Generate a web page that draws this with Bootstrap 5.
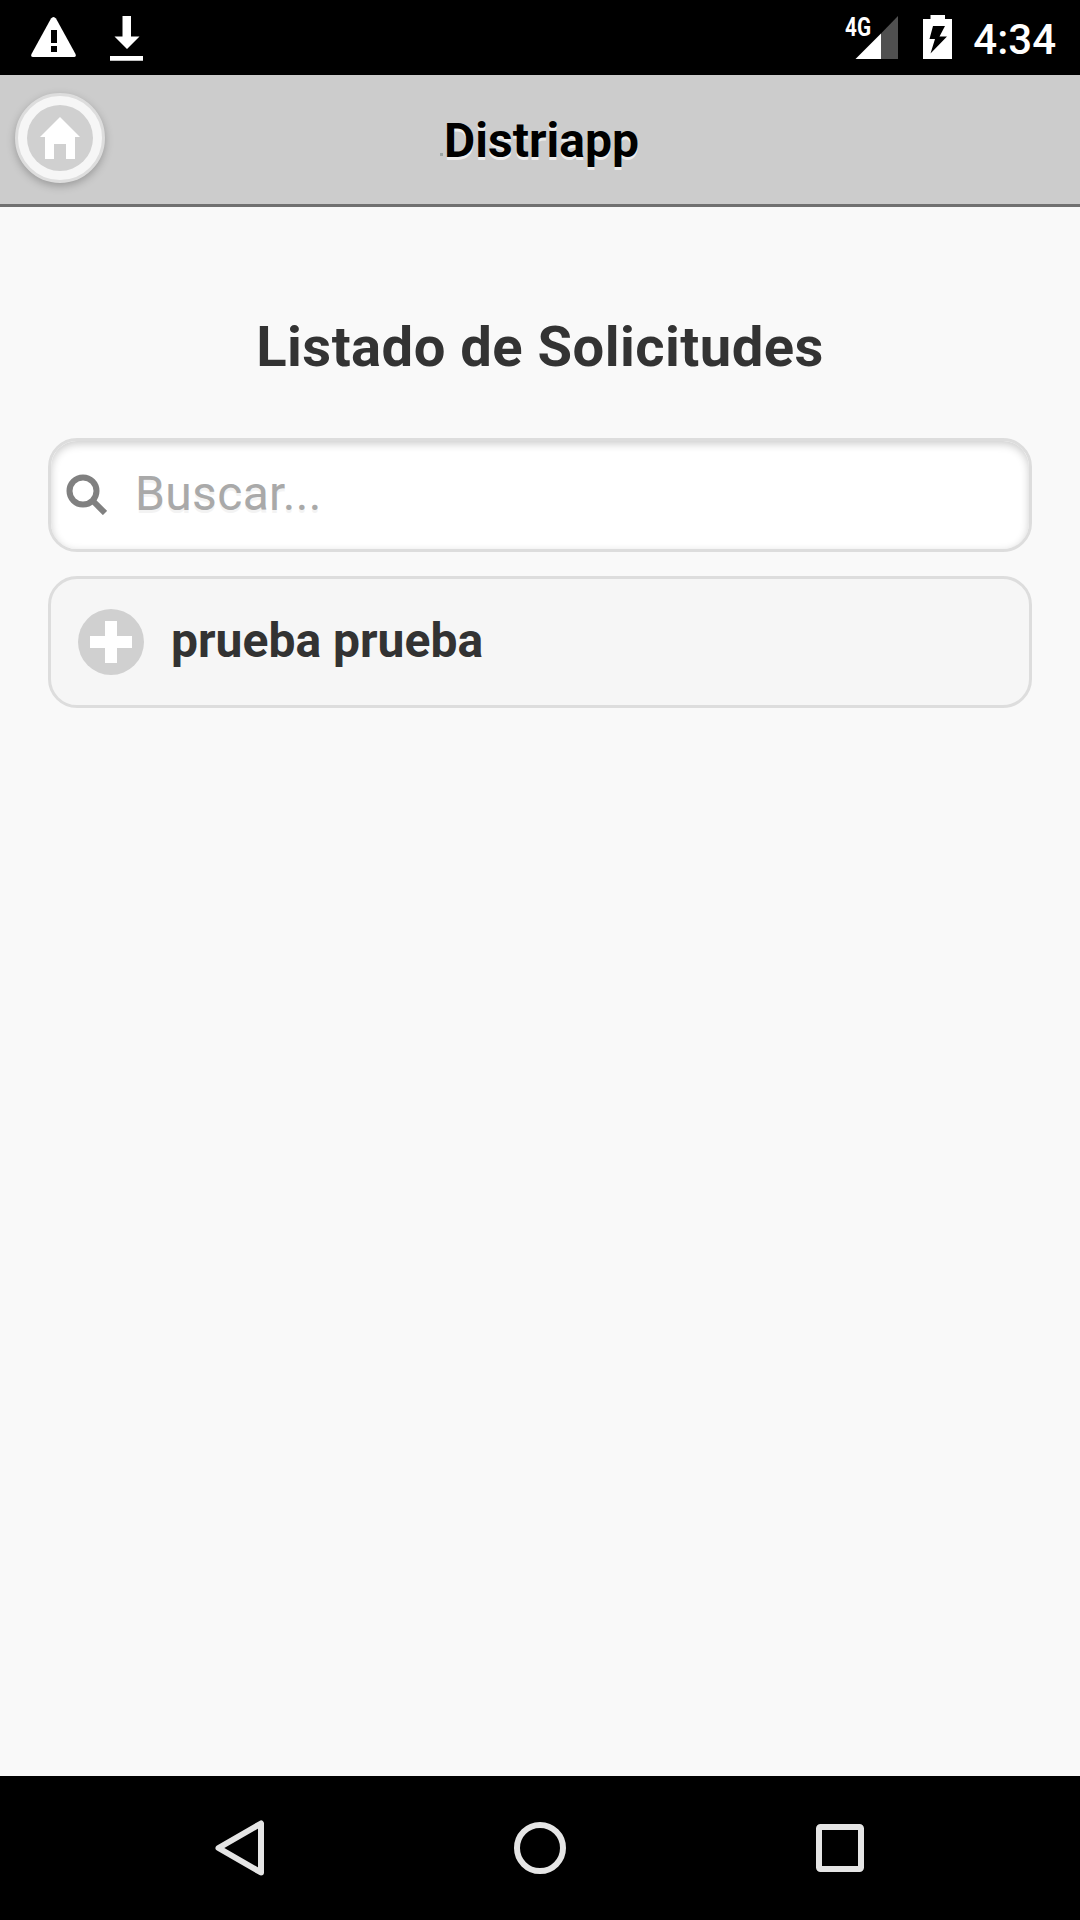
<!DOCTYPE html>
<html lang="es">
<head>
<meta charset="utf-8">
<meta name="viewport" content="width=device-width, initial-scale=1">
<title>Distriapp</title>
<link href="https://cdn.jsdelivr.net/npm/bootstrap@5.3.0/dist/css/bootstrap.min.css" rel="stylesheet">
<style>
body{font-family:Roboto,"Noto Sans",sans-serif;font-size:48px;line-height:1.3;color:#333;background:#f9f9f9}
svg{display:block;flex:none}
.status-bar{height:75px;background:#000;color:#fff;padding:0 24px 0 31px}
.clock{font-size:42px;font-weight:500;line-height:1;margin-left:20px;padding-top:5px}
.app-bar{height:132px;background:#ccc;border-bottom:3px solid #707070;padding-left:15px}
.home-btn,.home-btn:hover{width:90px;height:90px;padding:0;border:3px solid #ddd;background:#f6f6f6;box-shadow:0 3px 9px rgba(0,0,0,.25);margin-top:-3px}
.app-title{font-size:48px;font-weight:700;color:#000;line-height:62px;text-shadow:0 3px 0 #eee;margin:2px 106px 0 0}
.speck{width:3px;height:3px;background:#9aa4a4;margin:30px 1px 0 0}
.page-title{font-size:56.16px;font-weight:700;letter-spacing:.45px;line-height:73px;margin:104px 0 54px;text-align:center}
.search-box{height:114px;border:3px solid #ddd;border-radius:29px;background:#fff;box-shadow:inset 0 3px 9px rgba(0,0,0,.2);padding-left:14px}
.search-box svg{margin-top:-2px}
.search-box .form-control,.search-box .form-control:focus{font-size:48px;letter-spacing:.35px;line-height:62px;padding:0;margin-left:28px;border:0;background:none;box-shadow:none;border-radius:0;margin-top:-3px}
.search-box .form-control::placeholder{color:#a9a9a9;opacity:1;text-shadow:0 3px 0 #f3f3f3}
.request,.request:hover{height:132px;margin-top:24px;border:3px solid #ddd;border-radius:29px;background:#f6f6f6;padding:0 0 0 27px;font-size:48px;font-weight:700;line-height:62px;color:#333;text-shadow:0 3px 0 #f9f9f9}
.request-name{margin:-2px 0 0 27px}
.nav-keys{height:144px;background:#000}
.nav-keys svg{margin:0 114px}
</style>
<script src="https://cdn.jsdelivr.net/npm/bootstrap@5.3.0/dist/js/bootstrap.bundle.min.js"></script>
</head>
<body>
<div class="d-flex flex-column vh-100">
  <div class="status-bar d-flex align-items-center">
    <svg width="45" height="75" viewBox="31 0 45 75"><path fill="#fff" d="M51 18.500Q53.500 15.500 56 18.500L75.500 54Q76.500 57 74 57H33Q30.500 57 31.500 54Z"/><path d="M51 30h6v13h-6zM51 46h6v6h-6z"/></svg>
    <svg class="me-auto" width="68" height="75" viewBox="76 0 68 75"><path fill="#fff" d="M122.500 16h8.500v20.500h8.500L127 49 114.500 36.500h8zM110 56h33v4.800h-33z"/></svg>
    <svg width="54" height="75" viewBox="845 0 54 75"><text x="845" y="35.500" textLength="26" lengthAdjust="spacingAndGlyphs" font-family="Roboto" font-weight="700" font-size="25" fill="#fff">4G</text><path fill="#505050" d="M881 33.500 898 16v43h-17z"/><path fill="#fff" d="M855.500 59 881 33.500V59z"/></svg>
    <svg class="ms-4" width="30" height="75" viewBox="923 0 30 75"><path fill="#fff" d="M930.500 15h14.500v4h7v40h-29V19h7.500z"/><path d="M933 26h12l-5.500 10.500h7.500L930.500 53.500l4.500-14.500h-5.500z"/></svg>
    <span class="clock">4:34</span>
  </div>
  <header class="app-bar d-flex align-items-center">
    <a href="#" class="home-btn btn rounded-circle" aria-label="Inicio"><svg width="84" height="84" viewBox="18 96 84 84"><circle cx="60" cy="138" r="33" fill="#d0d0d0"/><path fill="#fff" d="M60 117 80 137h-5v22h-9v-15H54v15h-9v-22h-5z"/></svg></a>
    <div class="flex-fill d-flex justify-content-center align-items-center"><i class="speck"></i><h1 class="app-title">Distriapp</h1></div>
  </header>
  <main class="flex-fill px-5">
    <h3 class="page-title">Listado de Solicitudes</h3>
    <div class="search-box d-flex align-items-center">
      <svg width="42" height="42" viewBox="65 473 42 42" fill="none" stroke="#808080"><circle cx="83" cy="491" r="13.500" stroke-width="6"/><path stroke-width="6" d="m92.500 500.500 12.500 12.500"/></svg>
      <input class="form-control" type="text" placeholder="Buscar...">
    </div>
    <a href="#" class="request d-flex align-items-center text-decoration-none">
      <svg width="66" height="66" viewBox="0 0 66 66"><circle cx="33" cy="33" r="33" fill="#d0d0d0"/><path fill="#fff" d="M27 12h12v15h15v12H39v15H27V39H12V27h15z"/></svg>
      <span class="request-name">prueba prueba</span>
    </a>
  </main>
  <nav class="nav-keys d-flex justify-content-center align-items-center">
    <svg width="72" height="72" viewBox="204 1812 72 72" fill="none" stroke="#e5e5e5" stroke-width="6" stroke-linejoin="round"><path d="M218.500 1848 261 1823.500v49z"/></svg>
    <svg width="72" height="72" viewBox="0 0 72 72" fill="none" stroke="#e5e5e5" stroke-width="6"><circle cx="36" cy="36" r="23"/></svg>
    <svg width="72" height="72" viewBox="0 0 72 72" fill="none" stroke="#e5e5e5" stroke-width="6"><rect x="15" y="15" width="42" height="42" rx="1.500"/></svg>
  </nav>
</div>
</body>
</html>
